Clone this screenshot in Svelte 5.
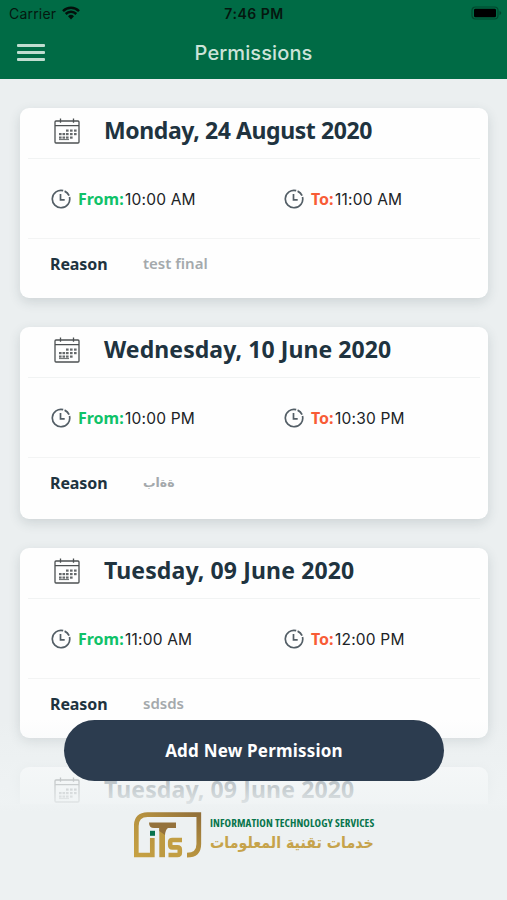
<script>
  const permissions = [
    { date: 'Monday, 24 August 2020', w: 'd1', from: '10:00 AM', to: '11:00 AM', reason: 'test final', size: 'short' },
    { date: 'Wednesday, 10 June 2020', w: 'd2', from: '10:00 PM', to: '10:30 PM', reason: 'ةةاب', size: 'tall', rtl: true },
    { date: 'Tuesday, 09 June 2020', w: 'd3', from: '11:00 AM', to: '12:00 PM', reason: 'sdsds', size: 'short' },
  ];
  const next = { date: 'Tuesday, 09 June 2020', w: 'd3' };
  const dots = [
    [12, 11.5], [16, 11.5], [20, 11.5],
    [5, 15], [8.5, 15], [12, 15], [16, 15], [20, 15],
    [5, 18.5], [8.5, 18.5], [12, 18.5], [16, 18.5],
  ];
</script>

{#snippet clock()}
  <svg class="clock" viewBox="0 0 20 20" width="20" height="20">
    <path d="M12.2 1.6A8.7 8.7 0 1 0 18.5 8" />
    <path d="M13.6 2.1A8.7 8.7 0 0 1 18.1 6.6" />
    <path d="M9.5 5V10.8H13.7" />
  </svg>
{/snippet}

{#snippet head(p)}
  <div class="head">
    <svg viewBox="0 0 26 26" width="26" height="26">
      <rect x="1" y="3" width="24" height="22" rx="1" />
      <path d="M1 7.7H25M6.5 .5V4.7M19.5 .5V4.7" />
      {#each dots as [x, y]}
        <rect class="dot" {x} {y} width="2.6" height="2.2" />
      {/each}
      <path class="dash" d="M5 21.6H15" />
    </svg>
    <h2 class={p.w}>{p.date}</h2>
  </div>
{/snippet}

<div class="screen">
  <header>
    <div class="status">
      <div class="carrier">
        <span>Carrier</span>
        <svg viewBox="0 0 18 14" width="18" height="14">
          <path d="M1 5.1A11.5 11.5 0 0 1 17 5.1" />
          <path d="M3.7 8A7.5 7.5 0 0 1 14.3 8" />
          <path class="fill" d="M6 10.2A4.3 4.3 0 0 1 12 10.2L9 13.5Z" />
        </svg>
      </div>
      <div class="time">7:46 PM</div>
      <svg class="battery" viewBox="0 0 31 14" width="31" height="14">
        <rect class="shell" x="1" y="1" width="26" height="12" rx="3.5" />
        <rect x="3" y="2.7" width="22" height="8.6" rx="1.4" />
        <path class="tip" d="M28.5 5v4q1.8-.7 1.8-2t-1.8-2" />
      </svg>
    </div>
    <div class="nav">
      <div class="menu"><i></i><i></i><i></i></div>
      <h1>Permissions</h1>
    </div>
  </header>

  <main>
    {#each permissions as p}
      <article class={p.size}>
        {@render head(p)}
        <div class="times">
          <div class="slot">{@render clock()}<b class="from">From:</b><span>{p.from}</span></div>
          <div class="slot">{@render clock()}<b class="to">To:</b><span>{p.to}</span></div>
        </div>
        <div class="reason">
          <b>Reason</b>
          <span class:arabic={p.rtl}>{p.reason}</span>
        </div>
      </article>
    {/each}
    <article class="next">{@render head(next)}</article>
  </main>

  <div class="fade"></div>
  <button>Add New Permission</button>

  <footer>
    <svg viewBox="0 0 68 47" width="68" height="47">
      <defs>
        <linearGradient id="gold" x1="0" y1="1" x2="1" y2="0">
          <stop offset="0" stop-color="#c6a143" />
          <stop offset=".55" stop-color="#b4903f" />
          <stop offset="1" stop-color="#92703a" />
        </linearGradient>
      </defs>
      <path class="line" d="M18.3 26V43H2.3V14Q2.3 2.6 13.5 2.6H64.8V32Q64.8 43.2 53 43.2" />
      <path fill="#94723c" d="M15 10.5H42V16H20Q15 16 15 10.5Z" />
      <path fill="#bd9a42" d="M25.3 16H31V45.2H25.3Z" />
      <path fill="#94723c" d="M25.3 16H34Q31.5 17.5 31 23L25.3 19Z" />
      <path class="s" d="M48 28H38.5Q36.2 28 36.2 30V33Q36.2 35.4 38.5 35.4H43.4Q45.8 35.4 45.8 37.7V40.6Q45.8 43 43.4 43H34.5" />
      <rect x="16" y="18.8" width="5" height="5" fill="#08734d" />
    </svg>
    <div class="brand">
      <div class="en">INFORMATION TECHNOLOGY SERVICES</div>
      <div class="ar"><span lang="ar" dir="rtl">خدمات تقنية المعلومات</span></div>
    </div>
  </footer>
</div>

<style>
  :global(body) { margin: 0; }
  .screen {
    position: relative; width: 507px; height: 900px; overflow: hidden;
    background: #ebeff0; font-family: "Noto Sans", "Open Sans", sans-serif; color: #20333f;
  }
  header { height: 79px; background: #006b45; font-family: Inter, sans-serif; }
  .status { display: grid; grid-template-columns: 1fr auto 1fr; align-items: center; height: 27px; padding: 0 5px 0 9px; color: #05170f; }
  .carrier { display: flex; align-items: center; gap: 6px; font-size: 14px; letter-spacing: .2px; }
  .carrier svg { fill: none; stroke: #03100b; stroke-width: 2.5; margin-top: -2px; }
  .carrier .fill { fill: #03100b; stroke: none; }
  .time { font-size: 14px; font-weight: 600; letter-spacing: .5px; margin-right: 3px; }
  .battery { justify-self: end; margin-top: -1px; }
  .shell { fill: none; stroke: #00482e; stroke-width: 1.2; }
  .tip { fill: #00482e; }
  .nav { display: grid; grid-template-columns: 80px 1fr 80px; align-items: center; height: 51px; }
  .menu { display: flex; flex-direction: column; gap: 4.5px; width: 28px; margin-left: 17px; }
  .menu i { height: 2.6px; border-radius: 1px; background: #c0ddd0; }
  h1 { margin: 0; text-align: center; font-size: 20px; line-height: 30px; font-weight: 500; letter-spacing: .1px; color: #cce3d9; }

  main { display: flex; flex-direction: column; gap: 29px; height: 725px; padding: 29px 19.5px 0 20px; box-sizing: border-box; overflow: hidden; }
  article { flex: none; height: 190px; border-radius: 9px; background: #fefefe; box-shadow: 0 4px 12px rgba(40, 60, 65, .15); }
  article.tall { height: 192px; }
  article.next { height: 60px; }
  .head { display: flex; align-items: center; height: 50px; margin: 0 8px; border-bottom: 1px solid #f1f3f3; }
  .head svg { margin: -5px 0 0 26px; fill: none; stroke: #4c5052; stroke-width: 1.3; }
  .head .dot { fill: #65696b; stroke: none; }
  .head .dash { stroke: #65696b; stroke-width: 1; }
  h2 { margin: -7px 0 0 24px; font-size: 23px; line-height: 32px; font-weight: 700; white-space: nowrap; }
  .d1 { letter-spacing: -.4px; }
  .d2 { letter-spacing: .08px; }
  .d3 { letter-spacing: .13px; }
  .times { display: grid; grid-template-columns: 233px 1fr; align-items: center; height: 79px; margin: 0 8px; padding-left: 23px; border-bottom: 1px solid #f3f4f4; }
  .slot { display: flex; align-items: center; height: 22px; font-size: 16px; white-space: nowrap; }
  .clock { fill: none; stroke: #535e66; stroke-width: 1.7; margin-right: 7px; }
  .slot b { font-weight: 700; padding-top: 1px; }
  .from { color: #10c268; width: 47px; }
  .to { color: #f85c36; width: 24px; }
  .slot span { font-family: Inter, sans-serif; font-size: 15.5px; letter-spacing: .2px; padding-top: 1px; color: #202326; }
  .reason { display: flex; align-items: center; height: 50px; padding-left: 30px; font-size: 16px; }
  .reason b { width: 93px; font-weight: 700; letter-spacing: -.1px; }
  .reason span { color: #a4a9ac; font-size: 15px; font-weight: 600; margin-top: -3px; }
  .reason .arabic { font-family: "DejaVu Sans", sans-serif; font-size: 12.5px; margin-top: -1px; }

  .fade { position: absolute; left: 0; right: 0; top: 720px; bottom: 0; background: linear-gradient(rgba(239, 243, 244, 0), rgba(239, 243, 244, .66) 50px, rgba(239, 243, 244, .9) 82px, #edf1f2 92px); }
  button {
    position: absolute; left: 64px; top: 720px; width: 380px; height: 61px; padding: 0; border: 0; border-radius: 31px;
    background: #2c3c4f; color: #fff; font: 700 17px "Noto Sans", sans-serif; letter-spacing: .2px;
  }
  footer { position: absolute; left: 134px; top: 812px; display: flex; gap: 8px; }
  .line { fill: none; stroke: url(#gold); stroke-width: 4.7; }
  .s { fill: none; stroke: #c29e43; stroke-width: 4.6; }
  .brand { width: 166px; padding-top: 3px; }
  .en { height: 16px; font: 700 11px/15px "Open Sans", sans-serif; font-stretch: 75%; letter-spacing: .1px; white-space: nowrap; color: #08754c; }
  .ar { height: 24px; display: flex; font: 700 16px/24px "DejaVu Sans", sans-serif; white-space: nowrap; color: #c6a34b; }
  .ar span { transform: scaleX(.89); transform-origin: left; }
</style>
